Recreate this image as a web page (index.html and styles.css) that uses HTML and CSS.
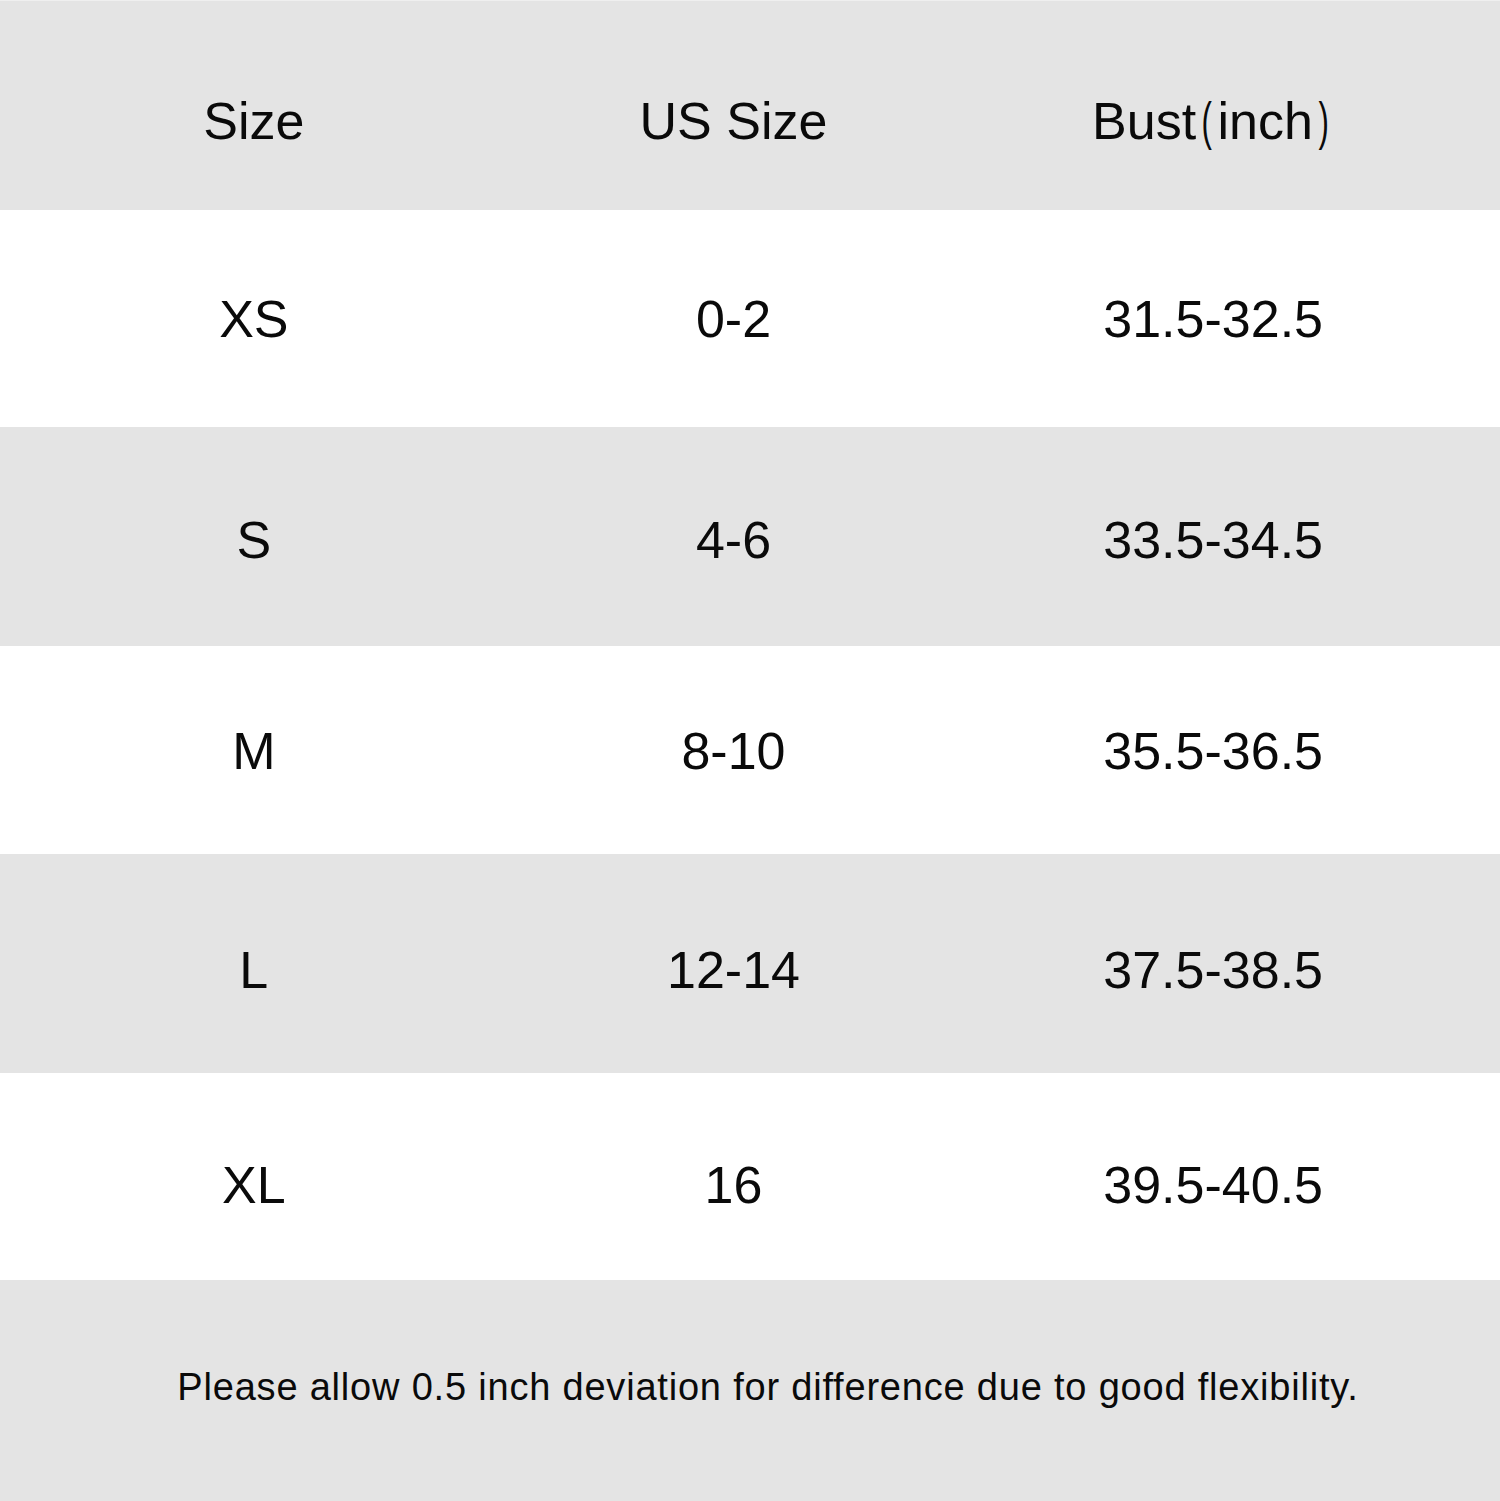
FILE: index.html
```html
<!DOCTYPE html>
<html lang="en">
<head>
<meta charset="utf-8">
<title>Size Chart</title>
<link rel="stylesheet" href="styles.css">
</head>
<body>
<div class="chart">
  <div class="row grey head">
    <div class="cell">Size</div>
    <div class="cell">US Size</div>
    <div class="cell">Bust<span class="paren">(</span>inch<span class="paren">)</span></div>
  </div>
  <div class="row white r-xs">
    <div class="cell">XS</div>
    <div class="cell">0-2</div>
    <div class="cell">31.5-32.5</div>
  </div>
  <div class="row grey r-s">
    <div class="cell">S</div>
    <div class="cell">4-6</div>
    <div class="cell">33.5-34.5</div>
  </div>
  <div class="row white r-m">
    <div class="cell">M</div>
    <div class="cell">8-10</div>
    <div class="cell">35.5-36.5</div>
  </div>
  <div class="row grey r-l">
    <div class="cell">L</div>
    <div class="cell">12-14</div>
    <div class="cell">37.5-38.5</div>
  </div>
  <div class="row white r-xl">
    <div class="cell">XL</div>
    <div class="cell">16</div>
    <div class="cell">39.5-40.5</div>
  </div>
  <div class="note grey">
    <p class="note-text">Please allow 0.5 inch deviation for difference due to good flexibility.</p>
  </div>
</div>
</body>
</html>
```

FILE: styles.css
```css
html, body {
  margin: 0;
  padding: 0;
  background: #ffffff;
}

.chart {
  width: 1500px;
  font-family: "Liberation Sans", Arial, Helvetica, sans-serif;
  color: #0a0a0a;
}

.grey { background: #e4e4e4; }
.white { background: #ffffff; }

.row {
  box-sizing: border-box;
  display: grid;
  grid-template-columns: repeat(3, 1fr);
  align-items: center;
  padding-left: 14px;
  padding-right: 47px;
  font-size: 52px;
  line-height: 1.15;
}

.cell {
  text-align: center;
  white-space: nowrap;
}

.paren {
  font-weight: 300;
  margin: 0 2px;
  display: inline-block;
  transform: scaleX(0.6);
}

.head {
  height: 210px;
  padding-top: 32px;
  border-top: 1px solid #efefef;
}
.r-xs { height: 217px; padding-top: 2px; }
.r-s { height: 219px; padding-top: 8px; }
.r-m { height: 208px; padding-top: 3px; }
.r-l { height: 219px; padding-top: 14px; }
.r-xl { height: 207px; padding-top: 19px; }

.note {
  box-sizing: border-box;
  height: 221px;
  display: flex;
  align-items: center;
  justify-content: center;
  padding-bottom: 6px;
  padding-left: 36px;
}

.note-text {
  margin: 0;
  font-size: 38px;
  letter-spacing: 0.8px;
  line-height: 1.15;
  white-space: nowrap;
}
```
